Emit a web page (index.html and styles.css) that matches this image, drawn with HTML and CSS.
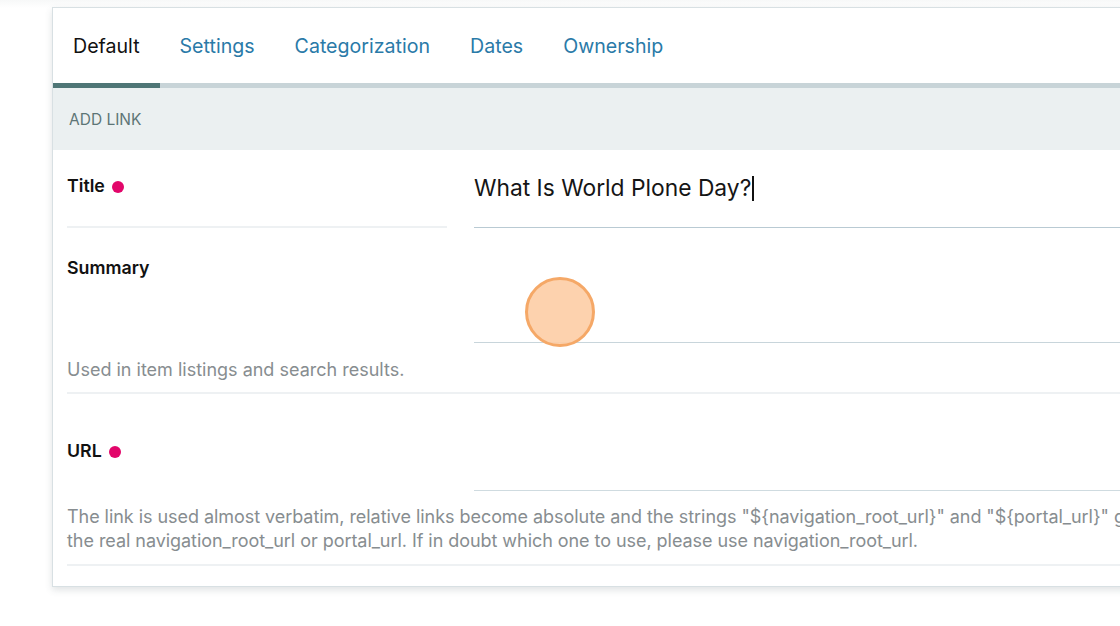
FILE: index.html
```html
<!DOCTYPE html>
<html lang="en">
<head>
<meta charset="utf-8">
<title>Add Link</title>
<link rel="stylesheet" href="styles.css">
</head>
<body>
<div class="page">
  <section class="card">
    <nav class="tabs">
      <a class="tab active">Default</a>
      <a class="tab">Settings</a>
      <a class="tab">Categorization</a>
      <a class="tab">Dates</a>
      <a class="tab">Ownership</a>
    </nav>
    <header class="section-head">ADD LINK</header>
    <div class="fields">
      <div class="field field-title">
        <div class="row">
          <label class="label">Title <span class="req"></span></label>
          <div class="input input-title"><span class="value">What Is World Plone Day?</span><span class="caret"></span></div>
        </div>
      </div>
      <div class="field field-summary">
        <div class="row">
          <label class="label">Summary</label>
          <div class="input input-summary"></div>
        </div>
        <p class="help">Used in item listings and search results.</p>
      </div>
      <div class="field field-url">
        <div class="row">
          <label class="label">URL <span class="req"></span></label>
          <div class="input input-url"></div>
        </div>
        <p class="help">The link is used almost verbatim, relative links become absolute and the strings "${navigation_root_url}" and "${portal_url}" get replaced with<br>the real navigation_root_url or portal_url. If in doubt which one to use, please use navigation_root_url.</p>
      </div>
    </div>
  </section>
  <div class="click-marker"></div>
</div>
</body>
</html>
```

FILE: styles.css
```css
* { box-sizing: border-box; }
html, body {
  margin: 0;
  padding: 0;
  width: 1120px;
  height: 626px;
  overflow: hidden;
  background: #ffffff;
  font-family: Inter, "Noto Sans", "Liberation Sans", sans-serif;
}
.page {
  position: relative;
  padding: 7px 0 0 52px;
  height: 626px;
  overflow: hidden;
  background: linear-gradient(#f7f8f8, #ffffff 8px);
}
.card {
  width: 1400px;
  background: #fff;
  border: 1px solid #d8e0e3;
  box-shadow: 0 3px 7px rgba(60, 80, 90, 0.16);
}
.tabs {
  display: flex;
  height: 80px;
  align-items: center;
  border-bottom: 5px solid #c8d4d8;
}
.tab {
  position: relative;
  display: flex;
  align-items: center;
  height: 100%;
  padding: 0 20px;
  font-size: 19.6px;
  color: #2a7aa8;
}
.tab.active {
  color: #111;
}
.tab.active::after {
  content: "";
  position: absolute;
  left: 0;
  right: 0;
  bottom: -5px;
  height: 5px;
  background: #4f7676;
}
.section-head {
  height: 62px;
  background: #ebf0f1;
  display: flex;
  align-items: center;
  padding-left: 16px;
  font-size: 15.5px;
  color: #5d7576;
}
.fields {
  padding: 0 0 20px 14px;
}
.row {
  display: grid;
  grid-template-columns: 380px 1fr;
  column-gap: 27px;
}
.label {
  display: flex;
  align-items: flex-start;
  font-size: 17.8px;
  font-weight: 600;
  color: #111;
}
.req {
  display: inline-block;
  width: 12px;
  height: 12px;
  border-radius: 50%;
  background: #e2066a;
  margin-left: 7px;
  margin-top: 6px;
}
.input {
  border-bottom: 1px solid #b9cad3;
}
.field-title .row { height: 78px; }
.field-title .label {
  padding-top: 25px;
  border-bottom: 2px solid #eef1f3;
}
.input-title {
  display: flex;
  align-items: flex-start;
  padding-top: 24px;
  font-size: 22.8px;
  color: #151515;
}
.caret {
  display: inline-block;
  width: 1.5px;
  height: 25px;
  background: #111;
  margin-left: 1px;
  margin-top: 2px;
}
.field-summary .row { height: 115px; }
.field-summary .label { padding-top: 29px; }
.input-summary { border-bottom-color: #c8d5db; }
.help {
  margin: 0;
  font-size: 18px;
  line-height: 24px;
  color: #878d90;
  white-space: nowrap;
}
.field-summary .help {
  height: 51px;
  padding-top: 15px;
  border-bottom: 2px solid #eef1f3;
}
.field-url .row { height: 97px; }
.field-url .label { padding-top: 46px; }
.input-url { border-bottom-color: #cfdbe0; }
.field-url .help {
  height: 75px;
  padding-top: 14px;
  letter-spacing: -0.05px;
  border-bottom: 2px solid #eef1f3;
}
.click-marker {
  position: absolute;
  left: 525px;
  top: 277px;
  width: 70px;
  height: 70px;
  border-radius: 50%;
  background: rgba(253, 205, 165, 0.9);
  border: 3px solid #f5a867;
}
```
